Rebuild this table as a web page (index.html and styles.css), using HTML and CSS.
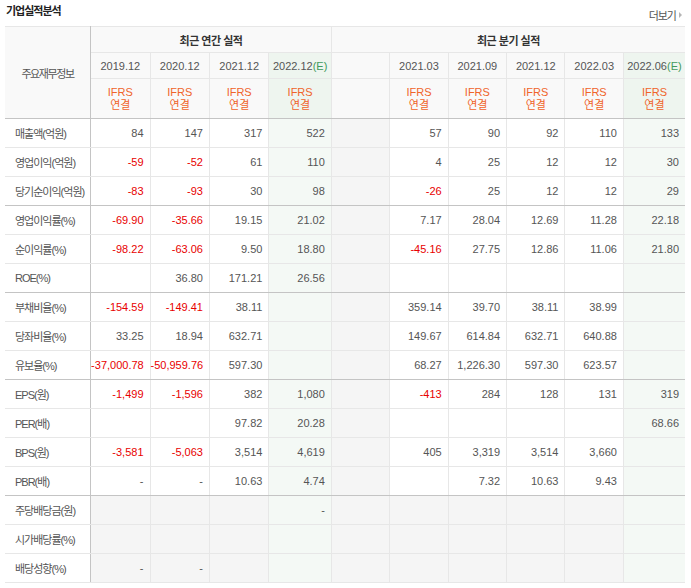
FILE: index.html
```html
<!DOCTYPE html>
<html lang="ko">
<head>
<meta charset="utf-8">
<title>기업실적분석</title>
<link rel="stylesheet" href="styles.css">
</head>
<body>
<div class="wrap">
  <div class="head">
    <h3 class="title">기업실적분석</h3>
    <a class="more" href="#">더보기<span class="arr"></span></a>
  </div>
  <table class="perf">
    <colgroup>
      <col class="c-lab"><col class="c-a"><col class="c-a"><col class="c-a"><col class="c-e">
      <col class="c-q"><col class="c-q"><col class="c-q"><col class="c-q"><col class="c-q"><col class="c-e2">
    </colgroup>
    <thead>
      <tr class="h1">
        <th class="lab hd gend" rowspan="3">주요재무정보</th>
        <th class="grp-title sepl" colspan="4">최근 연간 실적</th>
        <th class="grp-title sepl" colspan="6">최근 분기 실적</th>
      </tr>
      <tr class="h2">
        <th class="date sepl">2019.12</th>
        <th class="date">2020.12</th>
        <th class="date">2021.12</th>
        <th class="date est">2022.12<em>(E)</em></th>
        <th class="date sepl"></th>
        <th class="date">2021.03</th>
        <th class="date">2021.09</th>
        <th class="date">2021.12</th>
        <th class="date">2022.03</th>
        <th class="date est">2022.06<em>(E)</em></th>
      </tr>
      <tr class="h3 gend">
        <th class="ifrs sepl">IFRS<br>연결</th>
        <th class="ifrs">IFRS<br>연결</th>
        <th class="ifrs">IFRS<br>연결</th>
        <th class="ifrs est">IFRS<br>연결</th>
        <th class="ifrs sepl"></th>
        <th class="ifrs">IFRS<br>연결</th>
        <th class="ifrs">IFRS<br>연결</th>
        <th class="ifrs">IFRS<br>연결</th>
        <th class="ifrs">IFRS<br>연결</th>
        <th class="ifrs est">IFRS<br>연결</th>
      </tr>
    </thead>
    <tbody>
      <tr>
        <th class="lab">매출액(억원)</th>
        <td class="sepl">84</td><td>147</td><td>317</td><td class="est">522</td>
        <td class="sepl blank"></td><td>57</td><td>90</td><td>92</td><td>110</td><td class="est">133</td>
      </tr>
      <tr>
        <th class="lab">영업이익(억원)</th>
        <td class="sepl neg">-59</td><td class="neg">-52</td><td>61</td><td class="est">110</td>
        <td class="sepl blank"></td><td>4</td><td>25</td><td>12</td><td>12</td><td class="est">30</td>
      </tr>
      <tr class="gend">
        <th class="lab">당기순이익(억원)</th>
        <td class="sepl neg">-83</td><td class="neg">-93</td><td>30</td><td class="est">98</td>
        <td class="sepl blank"></td><td class="neg">-26</td><td>25</td><td>12</td><td>12</td><td class="est">29</td>
      </tr>
      <tr>
        <th class="lab">영업이익률(%)</th>
        <td class="sepl neg">-69.90</td><td class="neg">-35.66</td><td>19.15</td><td class="est">21.02</td>
        <td class="sepl blank"></td><td>7.17</td><td>28.04</td><td>12.69</td><td>11.28</td><td class="est">22.18</td>
      </tr>
      <tr>
        <th class="lab">순이익률(%)</th>
        <td class="sepl neg">-98.22</td><td class="neg">-63.06</td><td>9.50</td><td class="est">18.80</td>
        <td class="sepl blank"></td><td class="neg">-45.16</td><td>27.75</td><td>12.86</td><td>11.06</td><td class="est">21.80</td>
      </tr>
      <tr class="gend">
        <th class="lab">ROE(%)</th>
        <td class="sepl"></td><td>36.80</td><td>171.21</td><td class="est">26.56</td>
        <td class="sepl blank"></td><td></td><td></td><td></td><td></td><td class="est"></td>
      </tr>
      <tr>
        <th class="lab">부채비율(%)</th>
        <td class="sepl neg">-154.59</td><td class="neg">-149.41</td><td>38.11</td><td class="est"></td>
        <td class="sepl blank"></td><td>359.14</td><td>39.70</td><td>38.11</td><td>38.99</td><td class="est"></td>
      </tr>
      <tr>
        <th class="lab">당좌비율(%)</th>
        <td class="sepl">33.25</td><td>18.94</td><td>632.71</td><td class="est"></td>
        <td class="sepl blank"></td><td>149.67</td><td>614.84</td><td>632.71</td><td>640.88</td><td class="est"></td>
      </tr>
      <tr class="gend">
        <th class="lab">유보율(%)</th>
        <td class="sepl neg">-37,000.78</td><td class="neg">-50,959.76</td><td>597.30</td><td class="est"></td>
        <td class="sepl blank"></td><td>68.27</td><td>1,226.30</td><td>597.30</td><td>623.57</td><td class="est"></td>
      </tr>
      <tr>
        <th class="lab">EPS(원)</th>
        <td class="sepl neg">-1,499</td><td class="neg">-1,596</td><td>382</td><td class="est">1,080</td>
        <td class="sepl blank"></td><td class="neg">-413</td><td>284</td><td>128</td><td>131</td><td class="est">319</td>
      </tr>
      <tr>
        <th class="lab">PER(배)</th>
        <td class="sepl"></td><td></td><td>97.82</td><td class="est">20.28</td>
        <td class="sepl blank"></td><td></td><td></td><td></td><td></td><td class="est">68.66</td>
      </tr>
      <tr>
        <th class="lab">BPS(원)</th>
        <td class="sepl neg">-3,581</td><td class="neg">-5,063</td><td>3,514</td><td class="est">4,619</td>
        <td class="sepl blank"></td><td>405</td><td>3,319</td><td>3,514</td><td>3,660</td><td class="est"></td>
      </tr>
      <tr class="gend">
        <th class="lab">PBR(배)</th>
        <td class="sepl">-</td><td>-</td><td>10.63</td><td class="est">4.74</td>
        <td class="sepl blank"></td><td></td><td>7.32</td><td>10.63</td><td>9.43</td><td class="est"></td>
      </tr>
      <tr class="div">
        <th class="lab">주당배당금(원)</th>
        <td class="sepl"></td><td></td><td></td><td class="est">-</td>
        <td class="sepl"></td><td></td><td></td><td></td><td></td><td class="est"></td>
      </tr>
      <tr class="div">
        <th class="lab">시가배당률(%)</th>
        <td class="sepl"></td><td></td><td></td><td class="est"></td>
        <td class="sepl"></td><td></td><td></td><td></td><td></td><td class="est"></td>
      </tr>
      <tr class="div">
        <th class="lab">배당성향(%)</th>
        <td class="sepl">-</td><td>-</td><td></td><td class="est"></td>
        <td class="sepl"></td><td></td><td></td><td></td><td></td><td class="est"></td>
      </tr>
    </tbody>
  </table>
</div>
</body>
</html>
```

FILE: styles.css
```css
html, body {
  margin: 0;
  padding: 0;
  background: #fff;
}

body {
  font-family: "Liberation Sans", "Noto Sans CJK KR", sans-serif;
  color: #555;
}

.wrap {
  width: 680px;
  padding: 0 6px 0 5px;
}

.head {
  height: 26px;
  display: flex;
  align-items: center;
  justify-content: space-between;
}

.title {
  margin: 0;
  padding-left: 1px;
  margin-top: -7px;
  font-size: 11px;
  font-weight: bold;
  color: #222;
  letter-spacing: -1px;
}

.more {
  display: flex;
  align-items: center;
  gap: 3px;
  padding-right: 3px;
  margin-top: 3px;
  font-size: 11px;
  color: #555;
  letter-spacing: -1px;
  text-decoration: none;
}

.arr {
  width: 0;
  height: 0;
  border-top: 3px solid transparent;
  border-bottom: 3px solid transparent;
  border-left: 3px solid #b5b5b5;
}

.perf {
  width: 680px;
  table-layout: fixed;
  border-collapse: collapse;
  border-top: 1px solid #c4c4c4;
  border-bottom: 1px solid #c4c4c4;
}

.c-lab { width: 85px; }
.c-a { width: 59px; }
.c-e { width: 62px; }
.c-q { width: 58px; }
.c-e2 { width: 61px; }

.perf th,
.perf td {
  border: 1px solid #e7e7e7;
  padding: 0;
  font-size: 11px;
  font-weight: normal;
  white-space: nowrap;
  overflow: visible;
}

.perf tr > *:last-child { border-right: none; }
.perf .lab { border-left: none; }

.perf .sepl { border-left: 1px solid #c4c4c4; }
.perf .lab { border-right: 1px solid #c4c4c4; }
.perf tr.gend > *,
.perf th.gend { border-bottom: 1px solid #c4c4c4; }

.perf thead th {
  background: #f9f9f9;
  text-align: center;
}

.h1 th { height: 25px; }
.h2 th { height: 25px; }
.h3 th { height: 39px; }

.perf th.hd {
  color: #555;
  letter-spacing: -1.4px;
}

.perf .grp-title {
  font-weight: bold;
  color: #333;
  letter-spacing: -0.5px;
}

.date { color: #555; }
.date em {
  font-style: normal;
  color: #3f9a5c;
}

.perf .ifrs {
  color: #f0642a;
  line-height: 13px;
}

.perf thead .est { background: #eef5ef; }

.perf tbody th.lab {
  height: 28px;
  text-align: left;
  padding-left: 10px;
  color: #555;
  letter-spacing: -1px;
  background: #fff;
}

.perf tbody td {
  text-align: right;
  padding-right: 6px;
  color: #555;
}

.perf tbody td.est { background: #f4f9f5; }
.perf tbody td.blank { background: #f5f5f5; }
.perf tbody tr.div td { background: #f5f5f5; }
.perf tbody tr.div td.est { background: #f4f9f5; }

.perf tbody td.neg { color: #e80000; }
```
